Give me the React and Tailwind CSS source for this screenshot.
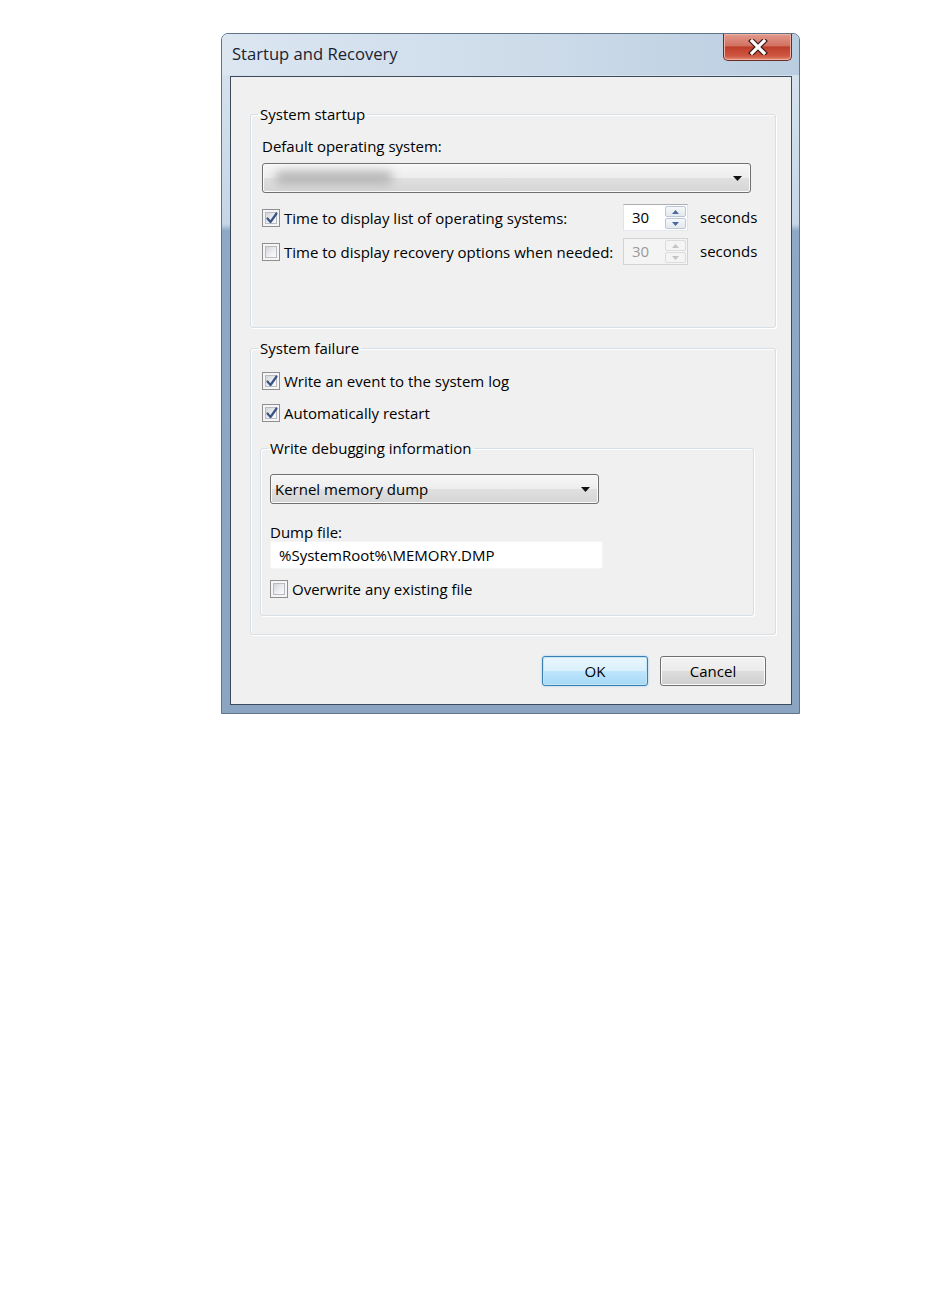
import React from 'react';

const font = 'font-["Open_Sans","Noto_Sans",sans-serif]';

// small widgets
const CheckBox = ({ checked = false }) => (
  <span className="w-[18px] h-[18px] shrink-0 border border-[#8f8f8f] bg-[#f5f5f5] p-[2px] flex">
    <span className="relative flex-1 border border-[#b8bcc2] bg-[linear-gradient(135deg,#d2d4d8,#eef0f2_60%,#fafafa)]">
      {checked && (
        <svg className="absolute -left-[2px] -top-[3px]" width="16" height="16" viewBox="0 0 16 16">
          <path d="M3.5 8.5 L6.5 12 L12.5 3.5" fill="none" stroke="#3b5285" strokeWidth="2.2" strokeLinecap="round" strokeLinejoin="round" />
        </svg>
      )}
    </span>
  </span>
);

const CheckRow = ({ checked, children, className = '' }) => (
  <div className={`flex shrink-0 items-center h-[20px] gap-[4px] ${className}`}>
    <CheckBox checked={checked} />
    <span className="leading-[20px] whitespace-nowrap">{children}</span>
  </div>
);

const Arrow = () => (
  <svg width="9" height="5" viewBox="0 0 9 5">
    <path d="M0 0 H9 L4.5 5 Z" fill="#111" />
  </svg>
);

const Combo = ({ children, className = '' }) => (
  <div className={`flex items-center justify-between rounded-[3px] border border-[#707070] bg-[linear-gradient(#f7f7f7,#ededed_50%,#e0e0e0_50%,#d5d5d5)] shadow-[inset_0_0_0_1px_#fbfbfb] pl-[4px] pr-[8px] ${className}`}>
    <div className="flex items-center">{children}</div>
    <Arrow />
  </div>
);

const Spin = ({ disabled = false }) => (
  <div className={`w-[65px] h-[27px] shrink-0 flex border ${disabled ? 'border-[#d3d3d3] bg-[#f4f4f4]' : 'border-[#abadb3] border-l-[#e2e3ea] border-r-[#e2e3ea] border-b-[#e3e9ef] bg-white'}`}>
    <span className={`flex-1 pl-[8px] leading-[25px] ${disabled ? 'text-[#9a9a9a]' : 'text-black'}`}>30</span>
    <div className="w-[22px] flex flex-col py-[1px] pr-[1px] gap-[1px]">
      {['M0 4 L3.5 0 L7 4 Z', 'M0 0 L3.5 4 L7 0 Z'].map((d, i) => (
        <span
          key={i}
          className={`flex-1 flex items-center justify-center rounded-[2px] border ${disabled ? 'border-[#dcdcdc] bg-[#f4f4f4]' : 'border-[#b9c7d6] bg-[linear-gradient(#f6f8fa,#e3e9ef)]'}`}
        >
          <svg width="7" height="4" viewBox="0 0 7 4">
            <path d={d} fill={disabled ? '#c4c4c4' : '#4a6aa0'} />
          </svg>
        </span>
      ))}
    </div>
  </div>
);

const Group = ({ title, children, className = '', inner = '' }) => (
  <fieldset className={`min-w-0 rounded-[3px] border border-[#d5dfe5] shadow-[inset_1px_1px_0_#fff,1px_1px_0_#fff] ${className}`}>
    <legend className="ml-[7px] px-[2px] leading-[20px]">{title}</legend>
    <div className={inner}>{children}</div>
  </fieldset>
);

const Button = ({ children, primary = false }) => (
  <button
    className={`w-[106px] h-[30px] rounded-[3px] border leading-[28px] ${
      primary
        ? 'border-[#3c7fb1] bg-[linear-gradient(#eaf6fd,#d9f0fc_50%,#bee6fd_50%,#a7d9f5)] shadow-[inset_0_0_0_1px_#c4e5f6,0_0_2px_#7fc4ef]'
        : 'border-[#707070] bg-[linear-gradient(#f2f2f2,#ebebeb_50%,#dddddd_50%,#cfcfcf)] shadow-[inset_0_0_0_1px_#fcfcfc]'
    }`}
  >
    {children}
  </button>
);

export default function App() {
  return (
    <div className={`w-[950px] h-[1305px] bg-white pt-[33px] pl-[221px] text-[15px] text-black ${font}`}>
      <div className="w-[579px] h-[681px] flex flex-col rounded-t-[7px] border border-[#5f7389] overflow-hidden bg-[linear-gradient(#d9e4ef,#c6d6e6_28%,#8ea8c5_29%,#8aa4c1)]">
        {/* title bar */}
        <div className="h-[41px] shrink-0 flex justify-between bg-[linear-gradient(90deg,#dbe6f1,#cddbe9_55%,#b9cde0)]">
          <span className="pl-[10px] pt-[9px] text-[16.6px] leading-[22px] text-[#1a2330]">Startup and Recovery</span>
          <div className="mr-[7px] w-[69px] h-[27px] flex items-center justify-center rounded-b-[5px] border border-t-0 border-[#6a2a22] bg-[linear-gradient(#e2998b,#d27262_45%,#bd3d2a_50%,#cf5843_85%,#e08f74)] shadow-[inset_0_0_0_1px_#eeb1a2]">
            <svg width="22" height="16" viewBox="0 0 22 16">
              <path d="M5 2 L17 14 M17 2 L5 14" stroke="#3a1a16" strokeWidth="5.5" strokeLinecap="square" />
              <path d="M5 2 L17 14 M17 2 L5 14" stroke="#ffffff" strokeWidth="3.2" strokeLinecap="square" />
            </svg>
          </div>
        </div>

        {/* body */}
        <div className="flex-1 pl-[8px] pr-[7px] pb-[8px] pt-[1px]">
          <div className="h-full border border-[#3c4a5b] bg-[#f0f0f0] pl-[19px] flex flex-col">
            <Group title="System startup" className="mt-[27px] w-[526px]" inner="pl-[11px] pr-[24px] pb-[62px]">
              <div className="mt-[12px] leading-[20px]">Default operating system:</div>
              <Combo className="mt-[7px] h-[30px]">
                <span className="ml-[8px] w-[118px] h-[14px] rounded-full bg-[#b8b8b8] blur-[5px]" />
              </Combo>
              <div className="mt-[11px] flex items-center">
                <CheckRow checked className="w-[361px]">Time to display list of operating systems:</CheckRow>
                <Spin />
                <span className="ml-[12px] shrink-0">seconds</span>
              </div>
              <div className="mt-[7px] flex items-center">
                <CheckRow className="w-[361px]">Time to display recovery options when needed:</CheckRow>
                <Spin disabled />
                <span className="ml-[12px] shrink-0">seconds</span>
              </div>
            </Group>

            <Group title="System failure" className="mt-[10px] w-[526px]" inner="pl-[11px] pr-[21px] pb-[18px]">
              <CheckRow checked className="mt-[13px]">Write an event to the system log</CheckRow>
              <CheckRow checked className="mt-[12px]">Automatically restart</CheckRow>
              <Group title="Write debugging information" className="mt-[15px] -ml-[2px]" inner="pl-[9px] pb-[16px]">
                <Combo className="mt-[16px] w-[329px] h-[30px]">
                  <span className="leading-[20px]">Kernel memory dump</span>
                </Combo>
                <div className="mt-[19px] leading-[18px]">Dump file:</div>
                <div className="w-[333px] h-[28px] bg-white border border-[#f4f4f4] pl-[8px] leading-[26px]">%SystemRoot%\MEMORY.DMP</div>
                <CheckRow className="mt-[10px]">Overwrite any existing file</CheckRow>
              </Group>
            </Group>

            <div className="mt-[21px] pr-[25px] flex justify-end gap-[12px]">
              <Button primary>OK</Button>
              <Button>Cancel</Button>
            </div>
          </div>
        </div>
      </div>
    </div>
  );
}
